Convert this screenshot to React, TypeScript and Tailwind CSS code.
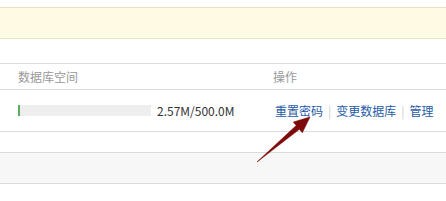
import React from 'react';

const font = { fontFamily: '"Noto Sans CJK SC", "Noto Sans", sans-serif' };

const Sep = () => <span className="mx-[5px] text-[#ccc]">|</span>;

export default function App() {
  return (
    <div className="relative w-[446px] h-[201px] bg-white overflow-hidden text-[12px]" style={font}>
      <div className="h-[7px]" />
      <div className="h-[32px] bg-[#fffae3] border-y border-[#e9e3c5]" />
      <div className="h-[24px]" />
      <div className="border-t border-[#dcdcdc]">
        <div className="flex h-[25px] items-center text-[#999]">
          <div className="w-[273px] pl-[18px]">数据库空间</div>
          <div>操作</div>
        </div>
      </div>
      <div className="border-t border-[#dcdcdc]">
        <div className="flex h-[41px] items-center">
          <div className="w-[275px] pl-[18px] flex items-center">
            <div className="w-[133px] h-[11px] bg-[#eeeeee] flex">
              <div className="w-[2px] h-full bg-[#5cae5c]" />
            </div>
            <span className="ml-[6px] text-[#333]">2.57M/500.0M</span>
          </div>
          <div className="text-[#1f5ba6] flex items-center">
            <span>重置密码</span>
            <Sep />
            <span>变更数据库</span>
            <Sep />
            <span>管理</span>
          </div>
        </div>
      </div>
      <div className="border-t border-[#dcdcdc] h-[21px]" />
      <div className="border-y border-[#dcdcdc] h-[32px] bg-[#f7f7f7]" />
      <svg className="absolute left-0 top-0" width="446" height="201" viewBox="0 0 446 201">
        <polygon
          points="257,162 296.2,125.5 293.3,122.1 310,117 302.3,132.7 299.4,129.3"
          fill="#7d0a0a"
          stroke="#7d0a0a"
          strokeWidth="0.6"
          strokeLinejoin="round"
        />
      </svg>
    </div>
  );
}
